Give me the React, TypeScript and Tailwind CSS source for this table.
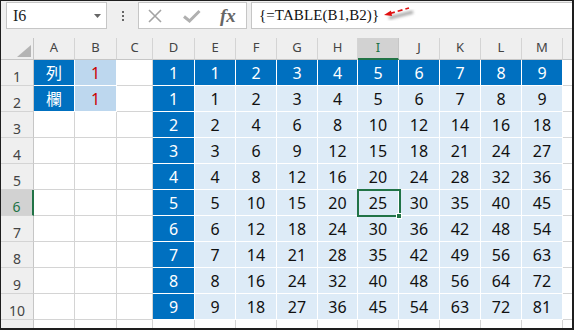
import React from "react";

const cols = [
  { l: "A", w: "w-[41px]" },
  { l: "B", w: "w-[42px]" },
  { l: "C", w: "w-[36px]" },
  { l: "D", w: "w-[42px]" },
  { l: "E", w: "w-[41px]" },
  { l: "F", w: "w-[41px]" },
  { l: "G", w: "w-[41px]" },
  { l: "H", w: "w-[40px]" },
  { l: "I", w: "w-[41px]" },
  { l: "J", w: "w-[41px]" },
  { l: "K", w: "w-[41px]" },
  { l: "L", w: "w-[41px]" },
  { l: "M", w: "w-[41px]" },
];

const rows = [1, 2, 3, 4, 5, 6, 7, 8, 9, 10, 11];

type Kind = "dark" | "light" | "input" | "empty";

const kindClass: Record<Kind, string> = {
  dark: "bg-[#0070c0] text-white border-white",
  light: "bg-[#ddebf7] text-[#111] border-white",
  input: "bg-[#bdd7ee] text-[#cc0000] border-white",
  empty: "bg-white border-[#d4d4d4]",
};

function cellOf(r: number, c: number): { text: string; kind: Kind } {
  if (r > 10) return { text: "", kind: "empty" };
  if (c === 0) {
    if (r === 1) return { text: "列", kind: "dark" };
    if (r === 2) return { text: "欄", kind: "dark" };
    return { text: "", kind: "empty" };
  }
  if (c === 1) {
    if (r <= 2) return { text: "1", kind: "input" };
    return { text: "", kind: "empty" };
  }
  if (c === 2) return { text: "", kind: "empty" };
  if (c === 3) return { text: r === 1 ? "1" : String(r - 1), kind: "dark" };
  const n = c - 3;
  if (r === 1) return { text: String(n), kind: "dark" };
  return { text: String((r - 1) * n), kind: "light" };
}

function FormulaBar() {
  return (
    <div className="h-[37px] flex items-start pt-[1px]">
      <div className="ml-[5px] w-[101px] h-[27px] bg-white border border-[#c6c6c6] flex items-center justify-between pl-[6px] pr-[5px]">
        <span className="font-['Liberation_Serif',serif] text-[16px] text-[#222]">I6</span>
        <svg width="7" height="4" viewBox="0 0 7 4">
          <polygon points="0,0 7,0 3.5,4" fill="#666" />
        </svg>
      </div>
      <div className="w-[31px] h-[27px] flex flex-col items-center justify-center gap-[2px]">
        <span className="w-[2px] h-[2px] bg-[#666]" />
        <span className="w-[2px] h-[2px] bg-[#666]" />
        <span className="w-[2px] h-[2px] bg-[#666]" />
      </div>
      <div className="w-[109px] h-[27px] bg-white border border-[#c6c6c6] flex items-center pl-[8px]">
        <svg width="16" height="16" viewBox="0 0 16 16">
          <path d="M2 2 L14 14 M14 2 L2 14" stroke="#a3a3a3" strokeWidth="1.6" />
        </svg>
        <svg width="18" height="14" viewBox="0 0 18 14" className="ml-[20px]">
          <path d="M1 7.5 L6.5 12 L16.5 2" stroke="#b0b0b0" strokeWidth="3" fill="none" />
        </svg>
        <span className="ml-[19px] font-['Liberation_Serif',serif] italic font-bold text-[19px] leading-none text-[#666]">
          fx
        </span>
      </div>
      <div className="ml-[4px] flex-1 h-[27px] bg-white border border-[#c6c6c6] border-r-0 flex items-center pl-[7px]">
        <span className="font-['Liberation_Serif',serif] text-[15px] text-[#111] tracking-[0.1px]">
          {"{=TABLE(B1,B2)}"}
        </span>
        <svg width="36" height="20" viewBox="0 0 36 20" className="ml-[4px] -mt-[4px]">
          <defs>
            <filter id="sh" x="-20%" y="-50%" width="140%" height="200%">
              <feGaussianBlur stdDeviation="1.6" />
            </filter>
          </defs>
          <path d="M6 14 L30 8" stroke="#8a8a8a" strokeWidth="3" filter="url(#sh)" opacity="0.8" />
          <path
            d="M7 9.5 L26 4"
            stroke="#e01010"
            strokeWidth="1.6"
            strokeDasharray="5 3"
            fill="none"
          />
          <polygon points="1,11 8,6.5 9,12" fill="#e01010" />
        </svg>
      </div>
    </div>
  );
}

function HeaderRow() {
  return (
    <div className="flex h-[22px]">
      <div className="w-[33px] h-full border-r border-b border-[#c6c6c6] relative">
        <svg width="14" height="12" viewBox="0 0 14 12" className="absolute right-[2px] bottom-[2px]">
          <polygon points="14,0 14,12 0,12" fill="#b4b4b4" />
        </svg>
      </div>
      {cols.map((c) => (
        <div
          key={c.l}
          className={`${c.w} h-full flex justify-center items-start leading-[19px] text-[13px] ${
            c.l === "I"
              ? "bg-[#d2d2d2] text-[#217346] border-r border-r-[#c6c6c6] border-b-2 border-b-[#217346]"
              : "text-[#444] border-r border-r-[#d4d4d4] border-b border-b-[#c6c6c6]"
          }`}
        >
          {c.l}
        </div>
      ))}
      <div className="flex-1 h-full border-b border-[#c6c6c6]" />
    </div>
  );
}

export default function App() {
  return (
    <div className="w-[574px] h-[330px] overflow-hidden bg-[#efefef] border-t border-l border-r-2 border-b-2 border-[#1e1e1e] font-['Noto_Sans','Noto_Sans_CJK_TC',sans-serif]">
      <FormulaBar />
      <HeaderRow />
      {rows.map((r) => (
        <div key={r} className="flex h-[26px]">
          <div
            className={`w-[33px] h-full flex justify-center items-end pb-[1px] text-[14px] leading-[14px] border-b border-b-[#d4d4d4] ${
              r === 6
                ? "bg-[#d2d2d2] text-[#217346] border-r-2 border-r-[#217346]"
                : "text-[#444] border-r border-r-[#c6c6c6]"
            }`}
          >
            {r <= 10 ? r : ""}
          </div>
          {cols.map((c, ci) => {
            const cell = cellOf(r, ci);
            const selected = r === 6 && c.l === "I";
            return (
              <div
                key={c.l}
                className={`${c.w} h-full relative flex items-center justify-center text-[16px] border-r border-b ${kindClass[cell.kind]}`}
              >
                {cell.text}
                {selected && (
                  <div className="absolute -left-[1px] -top-[1px] -right-[3px] -bottom-[2px] border-2 border-[#217346] z-10">
                    <div className="absolute -right-[3px] -bottom-[4px] w-[6px] h-[6px] bg-[#217346] border border-white" />
                  </div>
                )}
              </div>
            );
          })}
          <div className="flex-1 h-full bg-white border-b border-[#d4d4d4]" />
        </div>
      ))}
    </div>
  );
}
